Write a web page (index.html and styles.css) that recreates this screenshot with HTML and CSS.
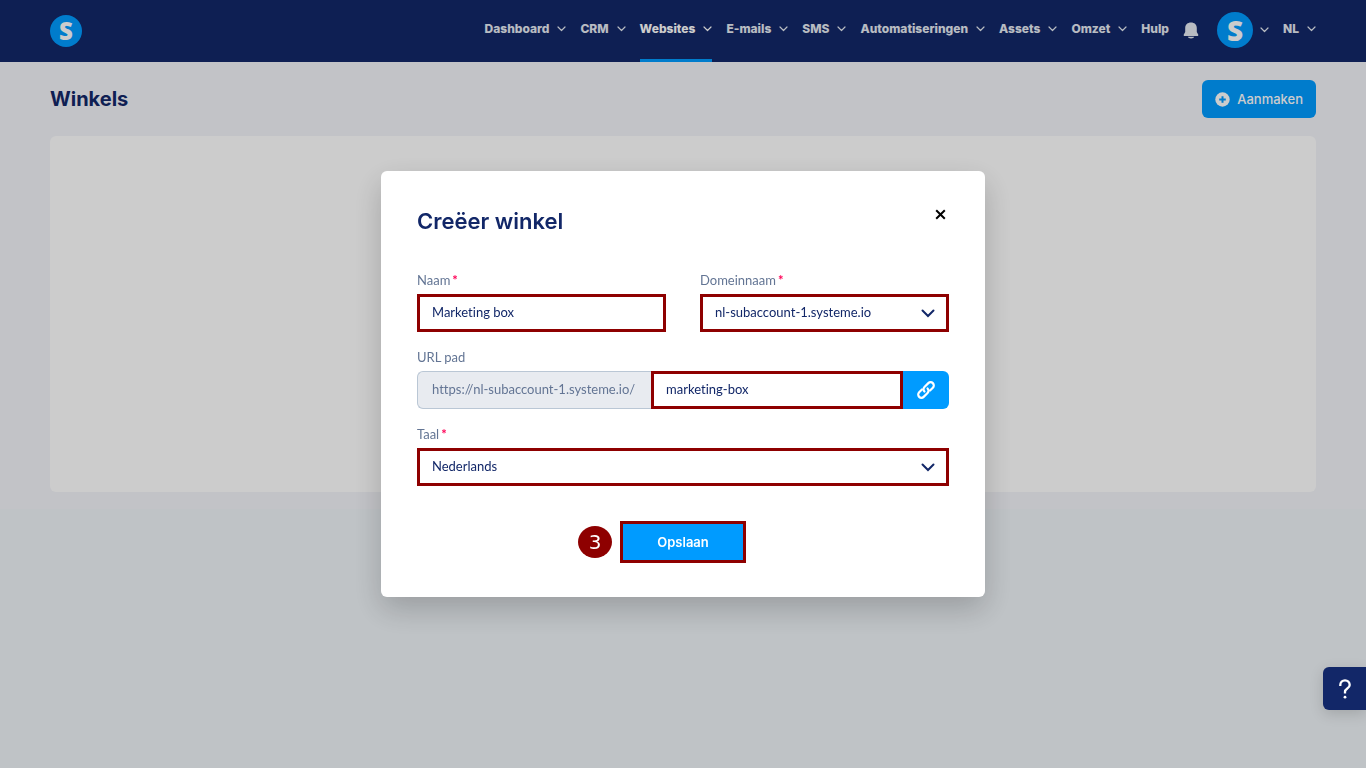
FILE: index.html
```html
<!DOCTYPE html>
<html lang="nl">
<head>
    <meta charset="UTF-8">
    <meta name="viewport" content="width=device-width, initial-scale=1.0">
    <title>Winkels</title>
    <link rel="stylesheet" href="styles.css">
</head>
<body>
    <svg class="sprite" aria-hidden="true">
        <symbol id="chevron" viewBox="0 0 9 6">
            <path d="M1 1 L4.5 4.5 L8 1" fill="none" stroke="currentColor" stroke-width="1.2" stroke-linecap="round" stroke-linejoin="round"/>
        </symbol>
        <symbol id="chevron-bold" viewBox="0 0 14 9">
            <path d="M1.5 1.5 L7 7 L12.5 1.5" fill="none" stroke="currentColor" stroke-width="2" stroke-linecap="round"/>
        </symbol>
    </svg>

    <header class="topbar">
        <a class="logo" href="#">S</a>
        <nav class="menu">
            <a href="#">Dashboard <svg class="caret"><use href="#chevron"/></svg></a>
            <a href="#">CRM <svg class="caret"><use href="#chevron"/></svg></a>
            <a href="#" class="active">Websites <svg class="caret"><use href="#chevron"/></svg></a>
            <a href="#">E-mails <svg class="caret"><use href="#chevron"/></svg></a>
            <a href="#">SMS <svg class="caret"><use href="#chevron"/></svg></a>
            <a href="#">Automatiseringen <svg class="caret"><use href="#chevron"/></svg></a>
            <a href="#">Assets <svg class="caret"><use href="#chevron"/></svg></a>
            <a href="#">Omzet <svg class="caret"><use href="#chevron"/></svg></a>
            <a href="#">Hulp</a>
            <button class="bell" aria-label="Meldingen">
                <svg width="16" height="17" viewBox="0 0 16 17" fill="currentColor">
                    <path d="M8 0.5C4.6 0.5 2.2 2.6 2.2 6V10L0.8 12.4C0.4 13.2 0.8 14 1.6 14H14.4C15.2 14 15.6 13.2 15.2 12.4L13.8 10V6C13.8 2.6 11.4 0.5 8 0.5Z"/>
                    <path d="M4.8 14.8H11.2C10.8 16 9.6 16.4 8 16.4C6.4 16.4 5.2 16 4.8 14.8Z"/>
                </svg>
            </button>
            <button class="account" aria-label="Account">
                <span class="avatar">S</span>
                <svg class="caret"><use href="#chevron"/></svg>
            </button>
            <button class="language">NL <svg class="caret"><use href="#chevron"/></svg></button>
        </nav>
    </header>

    <main>
        <div class="page-head">
            <h1>Winkels</h1>
            <button class="create">
                <svg width="15" height="15" viewBox="0 0 15 15">
                    <circle cx="7.5" cy="7.5" r="7.2" fill="currentColor"/>
                    <path d="M7.5 4.2V10.8M4.2 7.5H10.8" stroke="#009bff" stroke-width="2"/>
                </svg>
                Aanmaken
            </button>
        </div>
        <section class="card"></section>
    </main>

    <div class="overlay">
        <form class="modal" role="dialog" aria-labelledby="modal-title">
            <div class="modal-head">
                <h2 id="modal-title">Creëer winkel</h2>
                <button type="button" class="close" aria-label="Sluiten">
                    <svg width="11" height="11" viewBox="0 0 11 11">
                        <path d="M1.2 1.2L9.8 9.8M9.8 1.2L1.2 9.8" stroke="currentColor" stroke-width="2"/>
                    </svg>
                </button>
            </div>

            <div class="fields">
                <div class="field">
                    <label for="name">Naam<span class="required">*</span></label>
                    <input id="name" class="control marked" type="text" value="Marketing box">
                </div>
                <div class="field">
                    <label for="domain">Domeinnaam<span class="required">*</span></label>
                    <div class="select">
                        <select id="domain" class="control marked">
                            <option>nl-subaccount-1.systeme.io</option>
                        </select>
                        <svg class="arrow"><use href="#chevron-bold"/></svg>
                    </div>
                </div>
                <div class="field wide">
                    <label for="path">URL pad</label>
                    <div class="url">
                        <span class="prefix">https://nl-subaccount-1.systeme.io/</span>
                        <input id="path" class="control marked" type="text" value="marketing-box">
                        <button type="button" class="copy" aria-label="Link kopiëren">
                            <svg width="20" height="20" viewBox="-10 -10 20 20" fill="none" stroke="currentColor" stroke-width="2.2" stroke-linecap="round">
                                <g transform="rotate(-45)">
                                    <path d="M-2.5 -3.2H-6.5a3.2 3.2 0 0 0 0 6.4H-1a3.2 3.2 0 0 0 3.2 -3.2"/>
                                    <path d="M2.5 3.2H6.5a3.2 3.2 0 0 0 0 -6.4H1a3.2 3.2 0 0 0 -3.2 3.2"/>
                                </g>
                            </svg>
                        </button>
                    </div>
                </div>
                <div class="field wide">
                    <label for="lang">Taal<span class="required">*</span></label>
                    <div class="select">
                        <select id="lang" class="control marked">
                            <option>Nederlands</option>
                        </select>
                        <svg class="arrow"><use href="#chevron-bold"/></svg>
                    </div>
                </div>
            </div>

            <div class="actions">
                <span class="step">3</span>
                <button type="submit" class="save">Opslaan</button>
            </div>
        </form>
    </div>

    <button class="help" aria-label="Help">
        <svg width="14" height="22" viewBox="0 0 14 22" fill="none" stroke="currentColor" stroke-width="2.3">
            <path d="M2.3 8V7A4.7 4.7 0 0 1 11.7 7C11.7 10.6 7 10.4 7 13.8V15.5"/>
            <circle cx="7" cy="19.2" r="1.4" fill="currentColor" stroke="none"/>
        </svg>
    </button>
</body>
</html>
```
FILE: styles.css
```css
* {
    box-sizing: border-box;
}

body {
    margin: 0;
    min-height: 100vh;
    background-color: #eff4f8;
    color: #122768;
    font-family: Lato, sans-serif;
    font-size: 13px;
}

button,
input,
select {
    font-family: inherit;
    font-size: inherit;
    color: inherit;
}

button {
    display: flex;
    align-items: center;
    justify-content: center;
    padding: 0;
    border: none;
    background: none;
    cursor: pointer;
}

.sprite {
    display: none;
}

/* top bar */
.topbar {
    display: flex;
    align-items: center;
    justify-content: space-between;
    height: 62px;
    padding: 0 50px;
    background-color: #122768;
    color: #e6ebf3;
}

.logo,
.avatar {
    display: flex;
    align-items: center;
    justify-content: center;
    border-radius: 50%;
    background-color: #009bff;
    color: #fff;
    font-family: "Open Sans", sans-serif;
    font-weight: 800;
    text-decoration: none;
}

.logo {
    width: 32px;
    height: 32px;
    font-size: 24px;
    line-height: 32px;
}

.avatar {
    width: 36px;
    height: 36px;
    font-size: 28px;
    line-height: 34px;
}

.menu {
    display: flex;
    align-items: stretch;
    gap: 14px;
    height: 100%;
    font-family: Inter, sans-serif;
    font-size: 12px;
}

.menu a,
.menu button {
    display: flex;
    align-items: center;
    gap: 8px;
    padding-bottom: 5px;
    color: inherit;
    font-weight: 800;
    text-decoration: none;
}

.menu a.active {
    padding-bottom: 2px;
    border-bottom: 3px solid #009bff;
    color: #fff;
}

.menu .bell {
    padding-bottom: 2px;
}

.menu .account {
    gap: 7px;
    margin-left: 4px;
    padding-bottom: 2px;
}

.caret {
    width: 9px;
    height: 6px;
}

/* page */
main {
    padding: 18px 50px 17px;
    background-color: #f3f4f9;
}

.page-head {
    display: flex;
    align-items: center;
    justify-content: space-between;
    margin-bottom: 18px;
}

h1,
h2 {
    margin: 0;
    font-family: Inter, sans-serif;
    font-weight: 700;
}

h1 {
    font-size: 20px;
}

.create {
    gap: 7px;
    height: 38px;
    padding: 0 13px;
    border-radius: 6px;
    background-color: #009bff;
    color: #fff;
    font-family: Inter, sans-serif;
    font-size: 13px;
    font-weight: 500;
}

.card {
    min-height: 356px;
    border-radius: 6px;
    background-color: #fff;
}

/* modal */
.overlay {
    position: fixed;
    inset: 0;
    display: flex;
    align-items: center;
    justify-content: center;
    background-color: rgba(0, 0, 0, 0.2);
}

.modal {
    width: 100%;
    max-width: 604px;
    padding: 36px 36px 34px;
    border-radius: 6px;
    background-color: #fff;
    box-shadow: 0 12px 30px rgba(0, 0, 0, 0.2);
    font-variant-ligatures: none;
}

.modal-head {
    display: flex;
    align-items: flex-start;
    justify-content: space-between;
    margin-bottom: 37px;
}

h2 {
    font-size: 22px;
    font-weight: 600;
    line-height: 28px;
}

.close {
    width: 18px;
    height: 14px;
    color: #000;
}

.fields {
    display: grid;
    grid-template-columns: 1fr 1fr;
    gap: 17px 34px;
}

.field {
    display: flex;
    flex-direction: column;
    gap: 6px;
}

.wide {
    grid-column: 1 / -1;
}

label {
    color: #637594;
    line-height: 16px;
}

.required {
    margin-left: 2px;
    color: #ff0056;
    font-weight: 700;
}

.control {
    width: 100%;
    height: 38px;
    padding: 0 12px 2px;
    background-color: #fff;
    font-variant-ligatures: none;
    outline: none;
    appearance: none;
}

.marked {
    border: 3px solid #8e0000;
    border-radius: 0;
}

.select {
    position: relative;
}

.arrow {
    position: absolute;
    top: 15px;
    right: 14px;
    width: 14px;
    height: 9px;
    pointer-events: none;
}

.url {
    display: flex;
}

.prefix {
    flex: 0 0 44%;
    padding: 0 14px;
    border: 1px solid #bac7d5;
    border-right: none;
    border-radius: 6px 0 0 6px;
    background-color: #e8ebf0;
    color: #637594;
    line-height: 34px;
    white-space: nowrap;
}

.url .control {
    flex: 1;
    min-width: 0;
}

.copy {
    flex: 0 0 46px;
    border-radius: 0 6px 6px 0;
    background-color: #009bff;
    color: #fff;
}

.actions {
    display: grid;
    grid-template-columns: 1fr auto 1fr;
    align-items: center;
    gap: 8px;
    margin-top: 35px;
}

.step {
    justify-self: end;
    width: 34px;
    height: 32px;
    border-radius: 50%;
    background-color: #8e0000;
    color: #fff;
    font-family: "DejaVu Sans", sans-serif;
    font-size: 20px;
    line-height: 32px;
    text-align: center;
}

.save {
    width: 126px;
    height: 42px;
    border: 3px solid #8e0000;
    background-color: #009bff;
    color: #fff;
    font-family: Inter, sans-serif;
    font-size: 13px;
    font-weight: 600;
}

/* help tab on the window edge */
.help {
    position: fixed;
    right: 0;
    bottom: 58px;
    width: 43px;
    height: 43px;
    border-radius: 6px 0 0 6px;
    background-color: #122768;
    color: #fff;
    box-shadow: 0 4px 14px rgba(0, 0, 0, 0.15);
}
```
